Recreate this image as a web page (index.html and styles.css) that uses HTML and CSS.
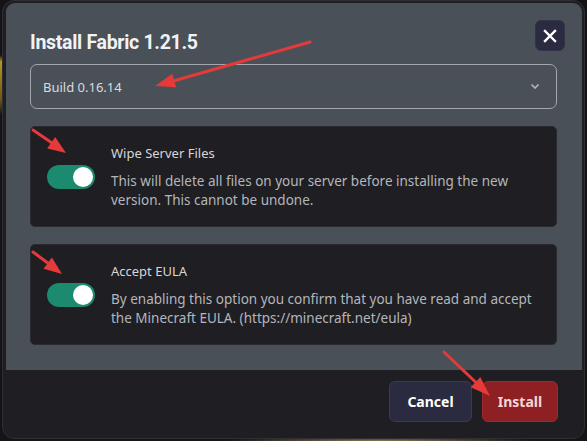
FILE: index.html
```html
<!DOCTYPE html>
<html lang="en">
<head>
<meta charset="utf-8">
<title>Install Fabric</title>
<link rel="stylesheet" href="styles.css">
</head>
<body>
<div class="dialog">
  <div class="top">
    <div class="header">
      <h1 class="title">Install Fabric 1.21.5</h1>
      <button class="close" aria-label="Close">
        <svg width="14" height="14" viewBox="0 0 14 14"><path d="M2 2L12 12M12 2L2 12" stroke="#ffffff" stroke-width="2.4" stroke-linecap="square"/></svg>
      </button>
    </div>
    <div class="select">
      <span class="select-text">Build 0.16.14</span>
      <svg class="chev" width="10" height="7" viewBox="0 0 10 7"><path d="M1.5 1.5L5 5L8.5 1.5" fill="none" stroke="#b4b8be" stroke-width="1.6"/></svg>
    </div>
    <div class="card">
      <div class="toggle"><span class="knob"></span></div>
      <div class="card-text">
        <div class="label">Wipe Server Files</div>
        <div class="desc">This will delete all files on your server before installing the new version. This cannot be undone.</div>
      </div>
    </div>
    <div class="card">
      <div class="toggle"><span class="knob"></span></div>
      <div class="card-text">
        <div class="label">Accept EULA</div>
        <div class="desc">By enabling this option you confirm that you have read and accept the Minecraft EULA. (https://minecraft.net/eula)</div>
      </div>
    </div>
  </div>
  <div class="footer">
    <button class="btn btn-cancel">Cancel</button>
    <button class="btn btn-install">Install</button>
  </div>
</div>
<svg class="arrows" width="587" height="441" viewBox="0 0 587 441">
  <g stroke="#e53a3a" stroke-width="3" stroke-linecap="round">
    <line x1="310" y1="42" x2="175" y2="80.5"/>
    <line x1="33" y1="130" x2="52" y2="143"/>
    <line x1="33" y1="252" x2="48.5" y2="263.5"/>
    <line x1="444" y1="352" x2="476" y2="382.5"/>
  </g>
  <g fill="#e53a3a">
    <polygon points="155,86 176.1,87.3 172.3,73.8"/>
    <polygon points="66,153 47.2,148.5 55.2,136.9"/>
    <polygon points="62,274 43.5,268.7 51.9,257.5"/>
    <polygon points="490,396 470.7,387.3 480.3,377.1"/>
  </g>
</svg>
</body>
</html>
```
FILE: styles.css
```css
* { box-sizing: border-box; }
html, body { margin: 0; padding: 0; }
body {
  width: 587px;
  height: 441px;
  overflow: hidden;
  position: relative;
  background-color: #141417;
  background-image:
    linear-gradient(to bottom, transparent 55px, #b8951e 62px, #6b5514 100px, transparent 115px),
    radial-gradient(ellipse 160px 4px at 380px 441px, #8a7a55, transparent);
  background-size: 3px 441px, 587px 441px;
  background-repeat: no-repeat;
  font-family: "Noto Sans", "Open Sans", sans-serif;
}
.dialog {
  position: relative;
  margin-left: 2px;
  width: 583px;
  height: 439px;
  background: #1e1e23;
  border: 1px solid #2e2e34;
  border-radius: 12px;
  padding: 2px 2px 0 3px;
  display: flex;
  flex-direction: column;
  overflow: hidden;
}
.top {
  background: #4a5058;
  border-radius: 9px 9px 0 0;
  height: 367px;
  padding: 17px 17px 0 24px;
  display: flex;
  flex-direction: column;
}
.header {
  display: flex;
  justify-content: space-between;
  align-items: flex-start;
  height: 31px;
  margin-bottom: 13px;
}
.title {
  margin: 10px 0 0 0;
  font-family: Roboto, "Noto Sans", sans-serif;
  font-size: 19.5px;
  line-height: 26px;
  font-weight: 700;
  letter-spacing: -0.3px;
  color: #f1f2f3;
}
.close {
  width: 30px;
  height: 31px;
  border: 1px solid #33334a;
  border-radius: 6px;
  background: #2a2a40;
  display: flex;
  align-items: center;
  justify-content: center;
  padding: 0;
  cursor: pointer;
}
.select {
  width: 527px;
  height: 45px;
  border: 1px solid #a3a7ad;
  border-radius: 7px;
  display: flex;
  align-items: center;
  justify-content: space-between;
  padding: 0 16px 0 12px;
  margin-bottom: 17px;
}
.select-text {
  font-size: 13px;
  color: #d9dbde;
}
.card {
  width: 527px;
  height: 101px;
  background: #1f1e23;
  border: 1px solid #2a2a30;
  border-radius: 5px;
  display: flex;
  align-items: center;
  padding: 0 16px;
  gap: 16px;
  margin-bottom: 17px;
}
.toggle {
  flex: none;
  width: 48px;
  height: 24px;
  border-radius: 12px;
  background: #1c8a6f;
  position: relative;
}
.knob {
  position: absolute;
  right: 2px;
  top: 2px;
  width: 20px;
  height: 20px;
  border-radius: 50%;
  background: #ffffff;
}
.card-text {
  display: flex;
  flex-direction: column;
  gap: 10px;
}
.label {
  font-size: 13px;
  line-height: 18px;
  color: #d6d7d9;
}
.desc {
  font-size: 13.5px;
  line-height: 19px;
  color: #b3b6bb;
}
.footer {
  flex: 1;
  display: flex;
  justify-content: flex-end;
  align-items: flex-start;
  gap: 10px;
  padding: 11px 24px 0 0;
}
.btn {
  height: 41px;
  border-radius: 6px;
  font-family: "Noto Sans", "Open Sans", sans-serif;
  font-size: 14px;
  font-weight: 700;
  padding: 0;
  cursor: pointer;
}
.btn-cancel {
  width: 83px;
  background: #2a2a40;
  border: 1px solid #3a3a52;
  color: #ffffff;
}
.btn-install {
  width: 76px;
  background: #8e1f22;
  border: 1px solid #a2292d;
  color: #f3d6d6;
}
.arrows {
  position: absolute;
  left: 0;
  top: 0;
  pointer-events: none;
}
```
